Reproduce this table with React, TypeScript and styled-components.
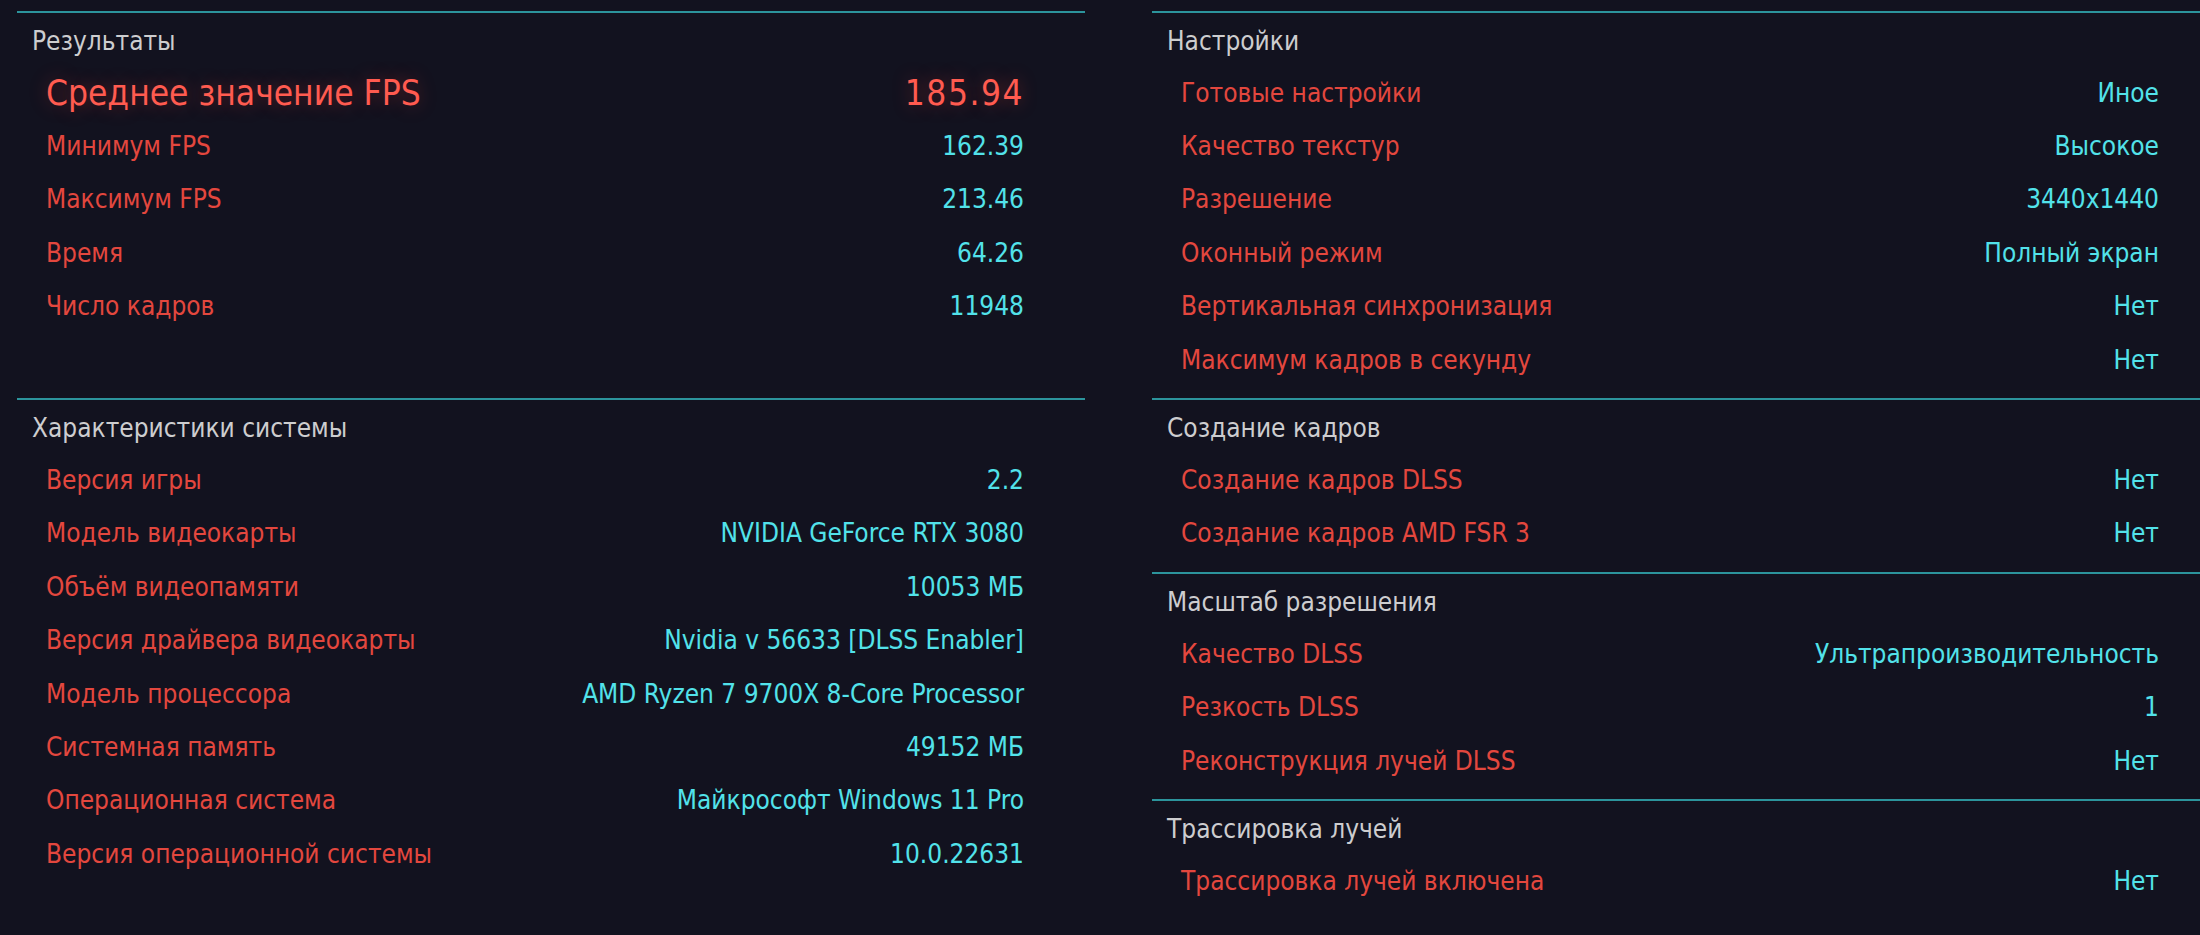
import React from 'react';
import styled, { createGlobalStyle } from 'styled-components';

const GlobalStyle = createGlobalStyle`
  html, body {
    margin: 0;
    padding: 0;
    background: #12121f;
    overflow: hidden;
  }
  body {
    font-family: 'DejaVu Sans Condensed', 'DejaVu Sans', sans-serif;
  }
`;

const Page = styled.div`
  width: 2200px;
  height: 935px;
  padding: 11px 0 0 17px;
  box-sizing: border-box;
  background: #12121f;
  display: grid;
  grid-template-columns: 1068px 1068px;
  grid-template-rows: auto auto;
  column-gap: 67px;
  align-content: start;
  overflow: hidden;
`;

const Column = styled.div`
  display: flex;
  flex-direction: column;
`;

const Section = styled.section`
  border-top: 2px solid #2c949c;
  padding: 13px 0 12px;
  display: flex;
  flex-direction: column;
`;

const SectionTitle = styled.div`
  padding-left: 15px;
  line-height: 30px;
  margin-bottom: 10px;
  font-size: 26px;
  color: #cdcdcf;
`;

const Row = styled.div`
  height: 53.4px;
  display: flex;
  align-items: center;
  justify-content: space-between;
  padding: 0 61px 0 29px;
  font-size: 26px;
`;

const Label = styled.span<{ $big?: boolean }>`
  color: ${(p) => (p.$big ? '#ff5b50' : '#e3473e')};
  font-size: ${(p) => (p.$big ? '35px' : '26px')};
  text-shadow: ${(p) => (p.$big ? '0 0 18px rgba(255, 60, 50, 0.35)' : 'none')};
`;

const Value = styled.span<{ $big?: boolean }>`
  color: ${(p) => (p.$big ? '#ff5b50' : '#52e2ea')};
  font-size: ${(p) => (p.$big ? '35px' : '26px')};
  letter-spacing: ${(p) => (p.$big ? '1.5px' : '0')};
  text-shadow: ${(p) => (p.$big ? '0 0 18px rgba(255, 60, 50, 0.35)' : 'none')};
`;

type Item = [string, string];

const results: Item[] = [
  ['Минимум FPS', '162.39'],
  ['Максимум FPS', '213.46'],
  ['Время', '64.26'],
  ['Число кадров', '11948'],
];

const system: Item[] = [
  ['Версия игры', '2.2'],
  ['Модель видеокарты', 'NVIDIA GeForce RTX 3080'],
  ['Объём видеопамяти', '10053 МБ'],
  ['Версия драйвера видеокарты', 'Nvidia v 56633 [DLSS Enabler]'],
  ['Модель процессора', 'AMD Ryzen 7 9700X 8-Core Processor'],
  ['Системная память', '49152 МБ'],
  ['Операционная система', 'Майкрософт Windows 11 Pro'],
  ['Версия операционной системы', '10.0.22631'],
];

const settings: Item[] = [
  ['Готовые настройки', 'Иное'],
  ['Качество текстур', 'Высокое'],
  ['Разрешение', '3440x1440'],
  ['Оконный режим', 'Полный экран'],
  ['Вертикальная синхронизация', 'Нет'],
  ['Максимум кадров в секунду', 'Нет'],
];

const frameGen: Item[] = [
  ['Создание кадров DLSS', 'Нет'],
  ['Создание кадров AMD FSR 3', 'Нет'],
];

const scaling: Item[] = [
  ['Качество DLSS', 'Ультрапроизводительность'],
  ['Резкость DLSS', '1'],
  ['Реконструкция лучей DLSS', 'Нет'],
];

const rayTracing: Item[] = [['Трассировка лучей включена', 'Нет']];

function Rows({ items }: { items: Item[] }) {
  return (
    <>
      {items.map(([label, value]) => (
        <Row key={label}>
          <Label>{label}</Label>
          <Value>{value}</Value>
        </Row>
      ))}
    </>
  );
}

function Block({ title, items, children }: { title: string; items: Item[]; children?: React.ReactNode }) {
  return (
    <Section>
      <SectionTitle>{title}</SectionTitle>
      {children}
      <Rows items={items} />
    </Section>
  );
}

export default function App() {
  return (
    <>
      <GlobalStyle />
      <Page>
        <Block title="Результаты" items={results}>
          <Row>
            <Label $big>Среднее значение FPS</Label>
            <Value $big>185.94</Value>
          </Row>
        </Block>
        <Block title="Настройки" items={settings} />
        <Block title="Характеристики системы" items={system} />
        <Column>
          <Block title="Создание кадров" items={frameGen} />
          <Block title="Масштаб разрешения" items={scaling} />
          <Block title="Трассировка лучей" items={rayTracing} />
        </Column>
      </Page>
    </>
  );
}
